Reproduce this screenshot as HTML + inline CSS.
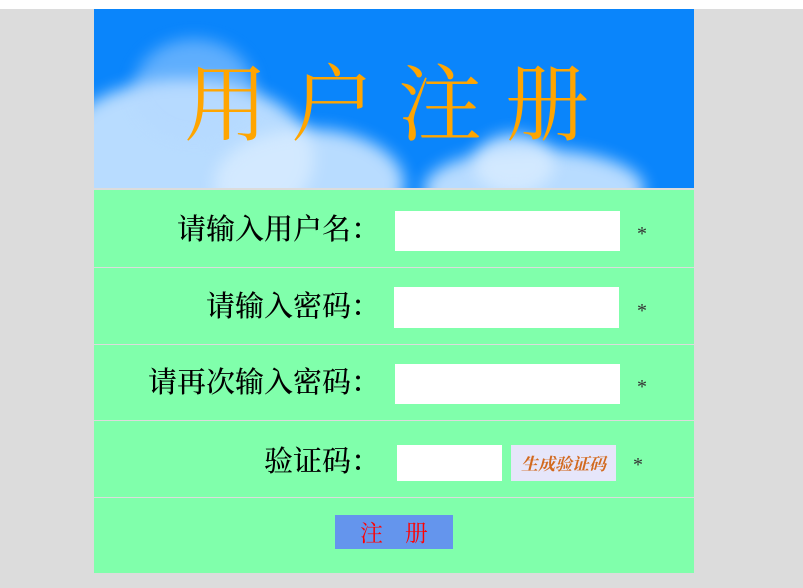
<!DOCTYPE html>
<html><head><meta charset="utf-8"><style>
body{margin:0;width:803px;height:588px;background:#dcdcdc;position:relative;overflow:hidden;font-family:"Noto Serif CJK SC","Liberation Serif",serif}
.top{position:absolute;left:0;top:0;width:803px;height:9px;background:#fff}
.ban{position:absolute;left:94px;top:9px;width:600px;height:179px;background:#0a85fb;overflow:hidden}
.c{position:absolute;border-radius:50%;background:rgba(215,235,255,.85);filter:blur(8px)}
.title{position:absolute;left:94px;top:44px;width:600px;text-align:center;color:#ffa500;font-size:84px;line-height:110px;letter-spacing:23px;text-indent:8px}
.row{position:absolute;left:94px;width:600px;background:#80ffab}
.sep{position:absolute;left:94px;width:600px;height:2px;background:#dcdcdc}
.lab{position:absolute;right:423px;font-size:29px;line-height:34px;color:#000;white-space:nowrap;font-weight:500}
.in{position:absolute;background:#fff}
.st{position:absolute;font-size:20px;color:#333;font-family:"Liberation Serif",serif}
</style></head><body>
<div class="top"></div>
<div class="ban">
<div class="c" style="left:-40px;top:70px;width:260px;height:160px"></div>
<div class="c" style="left:40px;top:30px;width:120px;height:100px;background:rgba(180,215,255,.5)"></div>
<div class="c" style="left:120px;top:120px;width:190px;height:110px"></div>
<div class="c" style="left:330px;top:140px;width:220px;height:80px"></div>
<div class="c" style="left:380px;top:125px;width:80px;height:60px"></div>
</div>
<div class="title">用户注册</div>
<div class="sep" style="top:188px"></div>
<div class="row" style="top:190px;height:77px"></div>
<div class="sep" style="top:267px;height:1px"></div>
<div class="row" style="top:268px;height:76px"></div>
<div class="sep" style="top:344px;height:1px"></div>
<div class="row" style="top:345px;height:75px"></div>
<div class="sep" style="top:420px;height:1px"></div>
<div class="row" style="top:421px;height:76px"></div>
<div class="sep" style="top:497px;height:1px"></div>
<div class="row" style="top:498px;height:75px"></div>

<div class="lab" style="top:211px">请输入用户名：</div>
<div class="in" style="left:395px;top:211px;width:225px;height:40px"></div>
<div class="st" style="left:637px;top:223px">*</div>

<div class="lab" style="top:288px">请输入密码：</div>
<div class="in" style="left:394px;top:287px;width:225px;height:41px"></div>
<div class="st" style="left:637px;top:300px">*</div>

<div class="lab" style="top:364px">请再次输入密码：</div>
<div class="in" style="left:395px;top:364px;width:225px;height:40px"></div>
<div class="st" style="left:637px;top:376px">*</div>

<div class="lab" style="top:443px">验证码：</div>
<div class="in" style="left:397px;top:445px;width:105px;height:36px"></div>
<div style="position:absolute;left:511px;top:445px;width:105px;height:36px;background:#e6e6fa;color:#d2691e;font-style:italic;font-weight:bold;font-size:17px;line-height:36px;text-align:center">生成验证码</div>
<div class="st" style="left:633px;top:454px">*</div>

<div style="position:absolute;left:335px;top:515px;width:118px;height:34px;background:#6495ed;color:#f00;font-size:23px;line-height:34px;text-align:center;letter-spacing:8px;text-indent:8px">注 册</div>
</body></html>
